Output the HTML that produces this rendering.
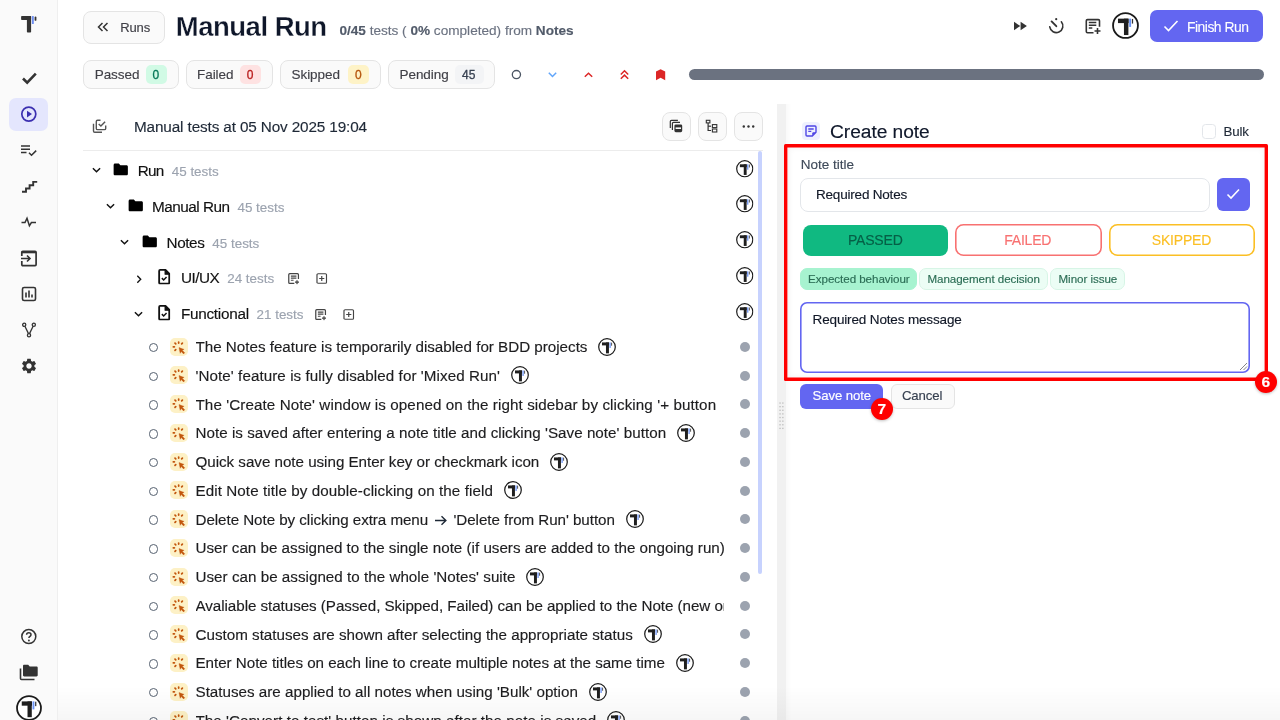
<!DOCTYPE html>
<html><head><meta charset="utf-8">
<style>
*{box-sizing:border-box;margin:0;padding:0}
html,body{width:1280px;height:720px;overflow:hidden;background:#fff;font-family:"Liberation Sans",sans-serif;color:#111827}
.t{position:absolute;white-space:nowrap;-webkit-text-stroke:0.15px currentColor}
svg.t{overflow:visible}
b{font-weight:bold}
</style></head>
<body>
<div id="root" style="position:absolute;left:0;top:0;width:1280px;height:720px;will-change:transform">
<svg width="0" height="0" style="position:absolute">
<defs>
<symbol id="tav" viewBox="0 0 28 28">
  <circle cx="14" cy="14" r="12.9" fill="#fff" stroke="#1a1a1a" stroke-width="1.9"/>
  <rect x="6.2" y="6.9" width="11" height="4.6" fill="#1f1f1f"/>
  <rect x="12.4" y="6.9" width="4.6" height="17" fill="#1f1f1f"/>
  <rect x="17.8" y="6.9" width="2" height="8.6" fill="#6b93f5"/>
  <rect x="20.6" y="7.2" width="1.3" height="4.8" fill="#333"/>
</symbol>
<symbol id="click" viewBox="0 0 18 18">
  <g stroke="#c2560c" stroke-width="1.7" stroke-linecap="round" fill="none">
    <path d="M8.67 4.0v1.1"/>
    <path d="M5.0 5.1l0.75 0.75"/>
    <path d="M12.4 5.1l-0.75 0.75"/>
    <path d="M3.3 8.85h1.1"/>
    <path d="M5.0 12.3l0.75 -0.75"/>
  </g>
  <path d="M9 9.6l5.1 1.8l-1.9 0.9l2.5 2.5l-1.1 1.1l-2.5 -2.5l-0.9 1.9z" fill="#c2560c" stroke="#c2560c" stroke-width="0.4" stroke-linejoin="round"/>
</symbol>
<symbol id="folder" viewBox="0 0 16 14">
  <path d="M0.5 2.2c0-0.9 0.6-1.6 1.5-1.6h4l1.6 1.8h6.4c0.9 0 1.5 0.6 1.5 1.5v7.6c0 0.9-0.6 1.5-1.5 1.5h-12c-0.9 0-1.5-0.6-1.5-1.5z" fill="#000"/>
</symbol>
<symbol id="doc" viewBox="0 0 13 16">
  <path d="M1.2 1.9c0-0.6 0.4-1 1-1h5.6l3.9 3.9v9.4c0 0.6-0.4 1-1 1h-8.5c-0.6 0-1-0.4-1-1z" fill="none" stroke="#111" stroke-width="1.9" stroke-linejoin="round"/>
  <path d="M7.4 0.9v4.4h4.4z" fill="#111" stroke="#111" stroke-width="1.2" stroke-linejoin="round"/>
  <path d="M4.0 9.4l1.9 1.9l3-3" fill="none" stroke="#111" stroke-width="1.6"/>
</symbol>
<symbol id="chevd" viewBox="0 0 10 6">
  <path d="M1 1l4 4l4-4" fill="none" stroke="#111" stroke-width="1.6"/>
</symbol>
<symbol id="chevr" viewBox="0 0 6 10">
  <path d="M1 1l4 4l-4 4" fill="none" stroke="#111" stroke-width="1.6"/>
</symbol>
<symbol id="noteadd" viewBox="0 0 12 12">
  <path d="M6.5 10.8h-4.8c-0.6 0-1-0.4-1-1v-8.1c0-0.6 0.4-1 1-1h8.1c0.6 0 1 0.4 1 1v4.6" fill="none" stroke="#444" stroke-width="1.3"/>
  <path d="M2.9 3.2h5.8M2.9 5.4h5.8M2.9 7.6h2.8" stroke="#444" stroke-width="1.2"/>
  <path d="M9.3 7.5v4.2M7.2 9.6h4.2" stroke="#444" stroke-width="1.3"/>
</symbol>
<symbol id="plussq" viewBox="0 0 12 12">
  <rect x="0.8" y="0.8" width="10.4" height="10.4" rx="1.2" fill="none" stroke="#444" stroke-width="1.3"/>
  <path d="M6 3.2v5.6M3.2 6h5.6" stroke="#444" stroke-width="1.3"/>
</symbol>
</defs>
</svg>
<div class="t" style="left:0px;top:0px;width:58px;height:720px;background:#fafafa;border-right:1px solid #efefef"></div>
<div class="t" style="left:9px;top:98px;width:39px;height:33px;background:#e4e6fd;border-radius:7px"></div>
<svg class="t" style="left:20px;top:15px" width="18" height="19" viewBox="0 0 18 19">
<rect x="1.1" y="1" width="10" height="4" rx="0.8" fill="#333"/><rect x="6.9" y="1" width="4.2" height="16.5" rx="0.8" fill="#333"/>
<rect x="11.9" y="1" width="1.9" height="8" rx="0.6" fill="#6b8cf0"/><rect x="14.6" y="1.5" width="1.8" height="4.3" rx="0.9" fill="#333"/></svg>
<svg class="t" style="left:21px;top:71px" width="17" height="15" viewBox="0 0 17 15">
<path d="M2 7.5l4.2 4.2l8.6-9" fill="none" stroke="#333" stroke-width="2.6"/></svg>
<svg class="t" style="left:20px;top:105px" width="18" height="18" viewBox="0 0 18 18">
<circle cx="8.8" cy="9.1" r="7" fill="none" stroke="#3b2fb0" stroke-width="1.7"/><path d="M7 5.8v6.6l5-3.3z" fill="#3b2fb0"/></svg>
<svg class="t" style="left:20px;top:143px" width="18" height="15" viewBox="0 0 18 15">
<path d="M1 3h9M1 6.3h9M1 9.6h5.5" stroke="#333" stroke-width="1.5"/><path d="M9 9.8l2.5 2.5l4.7-4.7" fill="none" stroke="#333" stroke-width="1.5"/></svg>
<svg class="t" style="left:21px;top:180px" width="17" height="14" viewBox="0 0 17 14">
<path d="M1 11.8h4v-3.3h3.6v-3.3h3.6v-3.3h4" fill="none" stroke="#333" stroke-width="1.9"/></svg>
<svg class="t" style="left:21px;top:216px" width="16" height="12" viewBox="0 0 16 12">
<path d="M0.5 6.5h3.5l2-4.3l2.4 7.6l2-3.3h4.6" fill="none" stroke="#333" stroke-width="1.5"/></svg>
<svg class="t" style="left:20px;top:250px" width="18" height="17" viewBox="0 0 18 17">
<path d="M1.8 6V2.3c0-0.6 0.4-1 1-1h12.3c0.6 0 1 0.4 1 1v12.3c0 0.6-0.4 1-1 1H2.8c-0.6 0-1-0.4-1-1V11" fill="none" stroke="#333" stroke-width="1.7"/>
<path d="M2 2.2h14" stroke="#333" stroke-width="2.2"/>
<path d="M1 8.5h8.5M7 5.5l3 3l-3 3" fill="none" stroke="#333" stroke-width="1.6"/></svg>
<svg class="t" style="left:21px;top:286px" width="16" height="16" viewBox="0 0 16 16">
<rect x="1.5" y="1.5" width="13" height="13" rx="1.6" fill="none" stroke="#333" stroke-width="1.6"/>
<path d="M5 6.5v5M8 4.5v7M11 8.5v3" stroke="#333" stroke-width="1.6"/></svg>
<svg class="t" style="left:21px;top:322px" width="16" height="16" viewBox="0 0 16 16">
<circle cx="3.2" cy="2.8" r="1.6" fill="none" stroke="#333" stroke-width="1.3"/>
<circle cx="12.8" cy="2.8" r="1.6" fill="none" stroke="#333" stroke-width="1.3"/>
<circle cx="8" cy="13.3" r="1.6" fill="none" stroke="#333" stroke-width="1.3"/>
<path d="M3.9 4.3l3.6 7.3M12.1 4.3l-3.6 7.3" stroke="#333" stroke-width="1.3"/></svg>
<svg class="t" style="left:20px;top:357px" width="18" height="18" viewBox="0 0 24 24">
<path fill="#333" d="M19.14 12.94c.04-.3.06-.61.06-.94 0-.32-.02-.64-.07-.94l2.03-1.58a.49.49 0 0 0 .12-.61l-1.92-3.32a.49.49 0 0 0-.59-.22l-2.39.96c-.5-.38-1.03-.7-1.62-.94l-.36-2.54a.48.48 0 0 0-.48-.41h-3.84c-.24 0-.43.17-.47.41l-.36 2.54c-.59.24-1.13.57-1.62.94l-2.39-.96a.49.49 0 0 0-.59.22L2.74 8.87c-.12.21-.08.47.12.61l2.03 1.58c-.05.3-.09.63-.09.94s.02.64.07.94l-2.03 1.58a.49.49 0 0 0-.12.61l1.92 3.32c.12.22.37.29.59.22l2.39-.96c.5.38 1.03.7 1.62.94l.36 2.54c.05.24.24.41.48.41h3.84c.24 0 .44-.17.47-.41l.36-2.54c.59-.24 1.13-.56 1.62-.94l2.39.96c.22.08.47 0 .59-.22l1.92-3.32c.12-.22.07-.47-.12-.61l-2.01-1.58zM12 15.6c-1.98 0-3.6-1.62-3.6-3.6s1.62-3.6 3.6-3.6 3.6 1.62 3.6 3.6-1.62 3.6-3.6 3.6z"/></svg>
<svg class="t" style="left:20px;top:628px" width="18" height="18" viewBox="0 0 18 18">
<circle cx="8.8" cy="8.6" r="7" fill="none" stroke="#333" stroke-width="1.5"/>
<path d="M6.6 6.8c0-1.3 1-2.1 2.2-2.1s2.2 0.8 2.2 2c0 1.6-2.1 1.7-2.1 3.3" fill="none" stroke="#333" stroke-width="1.5"/>
<circle cx="8.9" cy="12.5" r="0.95" fill="#333"/></svg>
<svg class="t" style="left:19px;top:664px" width="20" height="17" viewBox="0 0 20 17">
<path d="M1.5 4.5v10c0 0.6 0.4 1 1 1h13" fill="none" stroke="#333" stroke-width="1.6"/>
<path d="M4 2c0-0.7 0.5-1.2 1.2-1.2h4l1.5 1.6h6.8c0.7 0 1.2 0.5 1.2 1.2v7.6c0 0.7-0.5 1.2-1.2 1.2h-12.3c-0.7 0-1.2-0.5-1.2-1.2z" fill="#333"/></svg>
<svg class="t" style="left:16px;top:695px;" width="26" height="26"><use href="#tav"/></svg>
<div class="t" style="left:83px;top:11px;width:82px;height:33px;background:#fafafa;border:1px solid #e4e4e4;border-radius:8px"></div>
<svg class="t" style="left:97px;top:22px" width="12" height="10" viewBox="0 0 12 10">
<path d="M5.5 1l-4 4l4 4M10.5 1l-4 4l4 4" fill="none" stroke="#333" stroke-width="1.5"/></svg>
<div class="t" style="left:120.20px;top:19.50px;font-size:13px;line-height:15.60px;color:#3f3f46;font-weight:normal;letter-spacing:-0.1px;">Runs</div>
<div class="t" style="left:175.80px;top:10.17px;font-size:27.5px;line-height:33.00px;color:#0f172a;font-weight:bold;letter-spacing:-0.5px;-webkit-text-stroke:0.3px #fff">Manual Run</div>
<div class="t" style="left:339.40px;top:23.33px;font-size:13.6px;line-height:16.32px;color:#6b7280;font-weight:normal;letter-spacing:0px;"><b style="color:#525b6a">0/45</b> tests ( <b style="color:#525b6a">0%</b> completed) from <b style="color:#525b6a">Notes</b></div>
<svg class="t" style="left:1013px;top:21px" width="16" height="10" viewBox="0 0 16 10">
<path d="M1 0.8l6.3 4.2l-6.3 4.2zM7.6 0.8l6.3 4.2l-6.3 4.2z" fill="#333"/></svg>
<svg class="t" style="left:1047px;top:17px" width="18" height="18" viewBox="0 0 18 18">
<path d="M14.36 4.76A6.6 6.6 0 1 1 2.75 9.9" fill="none" stroke="#333" stroke-width="1.6" stroke-linecap="round"/>
<path d="M4.6 4.4l4.7 4.8" stroke="#333" stroke-width="1.9" stroke-linecap="round"/>
<circle cx="9.2" cy="2.2" r="1.1" fill="#333"/></svg>
<svg class="t" style="left:1085px;top:18px" width="17" height="17" viewBox="0 0 17 17">
<path d="M8.5 14.8h-6c-0.7 0-1.2-0.5-1.2-1.2v-10.8c0-0.7 0.5-1.2 1.2-1.2h10.8c0.7 0 1.2 0.5 1.2 1.2v6" fill="none" stroke="#333" stroke-width="1.6"/>
<path d="M3.8 4.4h7.5M3.8 7.2h7.5M3.8 10h3.5" stroke="#333" stroke-width="1.5"/>
<path d="M12.5 10v6M9.5 13h6" stroke="#333" stroke-width="1.6"/></svg>
<svg class="t" style="left:1112.3px;top:12.4px;" width="27" height="27"><use href="#tav"/></svg>
<div class="t" style="left:1150px;top:10px;width:113px;height:32px;background:#6366f1;border-radius:7px"></div>
<svg class="t" style="left:1163px;top:19px" width="16" height="14" viewBox="0 0 16 14">
<path d="M1.5 7.5l4 4l9-9.5" fill="none" stroke="#fff" stroke-width="1.6"/></svg>
<div class="t" style="left:1187.00px;top:19.14px;font-size:13.9px;line-height:16.68px;color:#fff;font-weight:normal;letter-spacing:-0.5px;-webkit-text-stroke:0.1px #fff">Finish Run</div>
<div class="t" style="left:83.2px;top:60px;width:95.5px;height:29px;background:#fafafa;border:1px solid #e4e4e4;border-radius:8px"></div>
<div class="t" style="left:94.70px;top:67.22px;font-size:13.5px;line-height:16.20px;color:#3f3f46;font-weight:normal;letter-spacing:-0.05px;">Passed</div>
<div class="t" style="left:145.5px;top:65px;width:21.3px;height:19px;background:#d1fae5;border-radius:5px"></div>
<div class="t" style="left:152.40px;top:67.64px;font-size:12px;line-height:14.40px;color:#047857;font-weight:normal;letter-spacing:0px;-webkit-text-stroke:0.3px currentColor">0</div>
<div class="t" style="left:185.5px;top:60px;width:87.5px;height:29px;background:#fafafa;border:1px solid #e4e4e4;border-radius:8px"></div>
<div class="t" style="left:197.00px;top:67.22px;font-size:13.5px;line-height:16.20px;color:#3f3f46;font-weight:normal;letter-spacing:-0.05px;">Failed</div>
<div class="t" style="left:239.8px;top:65px;width:21.3px;height:19px;background:#fee2e2;border-radius:5px"></div>
<div class="t" style="left:246.70px;top:67.64px;font-size:12px;line-height:14.40px;color:#b91c1c;font-weight:normal;letter-spacing:0px;-webkit-text-stroke:0.3px currentColor">0</div>
<div class="t" style="left:280px;top:60px;width:100.5px;height:29px;background:#fafafa;border:1px solid #e4e4e4;border-radius:8px"></div>
<div class="t" style="left:291.50px;top:67.22px;font-size:13.5px;line-height:16.20px;color:#3f3f46;font-weight:normal;letter-spacing:-0.05px;">Skipped</div>
<div class="t" style="left:348px;top:65px;width:21.3px;height:19px;background:#fef3c7;border-radius:5px"></div>
<div class="t" style="left:354.90px;top:67.64px;font-size:12px;line-height:14.40px;color:#b45309;font-weight:normal;letter-spacing:0px;-webkit-text-stroke:0.3px currentColor">0</div>
<div class="t" style="left:388px;top:60px;width:106.5px;height:29px;background:#fafafa;border:1px solid #e4e4e4;border-radius:8px"></div>
<div class="t" style="left:399.50px;top:67.22px;font-size:13.5px;line-height:16.20px;color:#3f3f46;font-weight:normal;letter-spacing:-0.05px;">Pending</div>
<div class="t" style="left:455px;top:65px;width:28.5px;height:19px;background:#f3f4f6;border-radius:5px"></div>
<div class="t" style="left:462.05px;top:67.64px;font-size:12px;line-height:14.40px;color:#374151;font-weight:normal;letter-spacing:0px;-webkit-text-stroke:0.3px currentColor">45</div>
<svg class="t" style="left:510px;top:69px" width="13" height="12" viewBox="0 0 13 12"><circle cx="6.4" cy="5.6" r="4.1" fill="none" stroke="#4b5563" stroke-width="1.3"/></svg>
<svg class="t" style="left:547px;top:71px" width="11" height="8" viewBox="0 0 11 8"><path d="M1.8 1.8l3.7 3.7l3.7-3.7" fill="none" stroke="#60a5fa" stroke-width="1.5"/></svg>
<svg class="t" style="left:583px;top:71px" width="11" height="8" viewBox="0 0 11 8"><path d="M1.8 5.8l3.7-3.5l3.7 3.5" fill="none" stroke="#dc2626" stroke-width="1.5"/></svg>
<svg class="t" style="left:619px;top:69px" width="11" height="12" viewBox="0 0 11 12"><path d="M1.8 5.5l3.7-3.7l3.7 3.7M1.8 9.8l3.7-3.7l3.7 3.7" fill="none" stroke="#dc2626" stroke-width="1.5"/></svg>
<svg class="t" style="left:655px;top:69px" width="11" height="12" viewBox="0 0 11 12"><path d="M1 2.5l4.6-2.2l4.6 2.2v8.7l-4.6-2.5l-4.6 2.5z" fill="#dc2626"/></svg>
<div class="t" style="left:689px;top:69px;width:575px;height:11px;background:#6b7280;border-radius:6px"></div>
<svg class="t" style="left:92px;top:119px" width="15" height="15" viewBox="0 0 15 15">
<path d="M1.5 4.8v7.3c0 0.7 0.5 1.2 1.2 1.2h7.3" fill="none" stroke="#555" stroke-width="1.4"/>
<path d="M8.5 1.2h-3c-0.7 0-1.2 0.5-1.2 1.2v7c0 0.7 0.5 1.2 1.2 1.2h7c0.7 0 1.2-0.5 1.2-1.2v-3" fill="none" stroke="#555" stroke-width="1.4"/>
<path d="M6.7 4.9l2.2 2.2l4.2-4.4" fill="none" stroke="#555" stroke-width="1.4"/></svg>
<div class="t" style="left:134.00px;top:118.32px;font-size:15.3px;line-height:18.36px;color:#1f2937;font-weight:normal;letter-spacing:-0.13px;">Manual tests at 05 Nov 2025 19:04</div>
<div class="t" style="left:662px;top:112px;width:29px;height:29px;background:#fafafa;border:1px solid #e4e4e4;border-radius:8px"></div>
<div class="t" style="left:698px;top:112px;width:29px;height:29px;background:#fafafa;border:1px solid #e4e4e4;border-radius:8px"></div>
<div class="t" style="left:734px;top:112px;width:29px;height:29px;background:#fafafa;border:1px solid #e4e4e4;border-radius:8px"></div>
<svg class="t" style="left:669px;top:119px" width="15" height="15" viewBox="0 0 15 15">
<path d="M1.3 9V2.6c0-0.7 0.5-1.2 1.2-1.2h6.4M3.4 11V4.6c0-0.7 0.5-1.2 1.2-1.2h6.4" fill="none" stroke="#333" stroke-width="1.2"/>
<rect x="5.4" y="5.4" width="7.8" height="7.8" rx="1.4" fill="#333"/><rect x="6.6" y="8.4" width="5.4" height="1.6" fill="#fafafa"/></svg>
<svg class="t" style="left:705px;top:119px" width="15" height="15" viewBox="0 0 15 15">
<rect x="1.3" y="1.3" width="3.6" height="2.6" fill="none" stroke="#333" stroke-width="1.1"/>
<path d="M3.1 4v7.5h3" fill="none" stroke="#333" stroke-width="1.2"/><path d="M3.1 7.2h3" stroke="#333" stroke-width="1.2"/>
<rect x="7.4" y="5.6" width="4.4" height="3" fill="none" stroke="#333" stroke-width="1.1"/>
<rect x="7.4" y="10" width="4.4" height="3" fill="none" stroke="#333" stroke-width="1.1"/></svg>
<svg class="t" style="left:741px;top:124px" width="15" height="5" viewBox="0 0 15 5"><circle cx="2.8" cy="2.5" r="1.2" fill="#333"/><circle cx="7.5" cy="2.5" r="1.2" fill="#333"/><circle cx="12.2" cy="2.5" r="1.2" fill="#333"/></svg>
<div class="t" style="left:83px;top:150px;width:680px;height:1px;background:#ececec"></div>
<svg class="t" style="left:91.5px;top:167.1px;" width="9" height="6"><use href="#chevd"/></svg>
<svg class="t" style="left:113px;top:162.6px;" width="15.5" height="13.3"><use href="#folder"/></svg>
<div class="t" style="left:137.80px;top:161.52px;font-size:15.3px;line-height:18.36px;color:#111111;font-weight:normal;letter-spacing:-0.8px;">Run<span style="font-size:13.4px;color:#9ca3af;margin-left:8.30px;letter-spacing:0px">45 tests</span></div>
<svg class="t" style="left:736px;top:159.5px;" width="17.5" height="17.5"><use href="#tav"/></svg>
<svg class="t" style="left:105.5px;top:203.1px;" width="9" height="6"><use href="#chevd"/></svg>
<svg class="t" style="left:127.5px;top:198.6px;" width="15.5" height="13.3"><use href="#folder"/></svg>
<div class="t" style="left:152.00px;top:197.52px;font-size:15.3px;line-height:18.36px;color:#111111;font-weight:normal;letter-spacing:-0.5px;">Manual Run<span style="font-size:13.4px;color:#9ca3af;margin-left:8.00px;letter-spacing:0px">45 tests</span></div>
<svg class="t" style="left:736px;top:195.3px;" width="17.5" height="17.5"><use href="#tav"/></svg>
<svg class="t" style="left:120px;top:239.1px;" width="9" height="6"><use href="#chevd"/></svg>
<svg class="t" style="left:142px;top:234.6px;" width="15.5" height="13.3"><use href="#folder"/></svg>
<div class="t" style="left:166.50px;top:233.52px;font-size:15.3px;line-height:18.36px;color:#111111;font-weight:normal;letter-spacing:-0.4px;">Notes<span style="font-size:13.4px;color:#9ca3af;margin-left:7.90px;letter-spacing:0px">45 tests</span></div>
<svg class="t" style="left:736px;top:231px;" width="17.5" height="17.5"><use href="#tav"/></svg>
<svg class="t" style="left:135.7px;top:274.79999999999995px;" width="6" height="8.5"><use href="#chevr"/></svg>
<svg class="t" style="left:157.8px;top:269.09999999999997px;" width="12.5" height="15.5"><use href="#doc"/></svg>
<div class="t" style="left:180.90px;top:269.32px;font-size:15.3px;line-height:18.36px;color:#111111;font-weight:normal;letter-spacing:-0.5px;">UI/UX<span style="font-size:13.4px;color:#9ca3af;margin-left:8.00px;letter-spacing:0px">24 tests</span></div>
<svg class="t" style="left:736px;top:266.8px;" width="17.5" height="17.5"><use href="#tav"/></svg>
<svg class="t" style="left:134.4px;top:310.9px;" width="9" height="6"><use href="#chevd"/></svg>
<svg class="t" style="left:157.8px;top:305.09999999999997px;" width="12.5" height="15.5"><use href="#doc"/></svg>
<div class="t" style="left:180.90px;top:305.32px;font-size:15.3px;line-height:18.36px;color:#111111;font-weight:normal;letter-spacing:-0.27px;">Functional<span style="font-size:13.4px;color:#9ca3af;margin-left:7.77px;letter-spacing:0px">21 tests</span></div>
<svg class="t" style="left:736px;top:302.5px;" width="17.5" height="17.5"><use href="#tav"/></svg>
<svg class="t" style="left:287.8px;top:273px;" width="11.7" height="11.5"><use href="#noteadd"/></svg>
<svg class="t" style="left:316.2px;top:273px;" width="11.5" height="11"><use href="#plussq"/></svg>
<svg class="t" style="left:314.8px;top:309px;" width="11.7" height="11.5"><use href="#noteadd"/></svg>
<svg class="t" style="left:343.4px;top:309px;" width="11.5" height="11"><use href="#plussq"/></svg>
<div id="tests">
<div class="t" style="left:148.5px;top:342.9px;width:9.5px;height:9.5px;border:1.3px solid #55606f;border-radius:50%"></div>
<div class="t" style="left:169.7px;top:337.7px;width:18px;height:18px;background:#fdf1c6;border-radius:5px"></div>
<svg class="t" style="left:169.7px;top:337.7px;" width="18" height="18"><use href="#click"/></svg>
<div class="t" style="left:195.5px;top:337.00px;width:528.5px;overflow:hidden;font-size:15.2px;line-height:19px;color:#1d1d1f;letter-spacing:-0.01px">The Notes feature is temporarily disabled for BDD projects<svg style="display:inline-block;vertical-align:-3.5px;margin-left:11px" width="18" height="18"><use href="#tav"/></svg></div>
<div class="t" style="left:740px;top:341.8px;width:10px;height:10px;background:#9ca3af;border-radius:50%"></div>
<div class="t" style="left:148.5px;top:371.65px;width:9.5px;height:9.5px;border:1.3px solid #55606f;border-radius:50%"></div>
<div class="t" style="left:169.7px;top:366.45px;width:18px;height:18px;background:#fdf1c6;border-radius:5px"></div>
<svg class="t" style="left:169.7px;top:366.45px;" width="18" height="18"><use href="#click"/></svg>
<div class="t" style="left:195.5px;top:365.75px;width:528.5px;overflow:hidden;font-size:15.2px;line-height:19px;color:#1d1d1f;letter-spacing:0.07px">'Note' feature is fully disabled for 'Mixed Run'<svg style="display:inline-block;vertical-align:-3.5px;margin-left:11px" width="18" height="18"><use href="#tav"/></svg></div>
<div class="t" style="left:740px;top:370.55px;width:10px;height:10px;background:#9ca3af;border-radius:50%"></div>
<div class="t" style="left:148.5px;top:400.4px;width:9.5px;height:9.5px;border:1.3px solid #55606f;border-radius:50%"></div>
<div class="t" style="left:169.7px;top:395.2px;width:18px;height:18px;background:#fdf1c6;border-radius:5px"></div>
<svg class="t" style="left:169.7px;top:395.2px;" width="18" height="18"><use href="#click"/></svg>
<div class="t" style="left:195.5px;top:394.50px;width:528.5px;overflow:hidden;font-size:15.2px;line-height:19px;color:#1d1d1f;letter-spacing:0.087px">The 'Create Note' window is opened on the right sidebar by clicking '+ button</div>
<div class="t" style="left:740px;top:399.3px;width:10px;height:10px;background:#9ca3af;border-radius:50%"></div>
<div class="t" style="left:148.5px;top:429.15px;width:9.5px;height:9.5px;border:1.3px solid #55606f;border-radius:50%"></div>
<div class="t" style="left:169.7px;top:423.95px;width:18px;height:18px;background:#fdf1c6;border-radius:5px"></div>
<svg class="t" style="left:169.7px;top:423.95px;" width="18" height="18"><use href="#click"/></svg>
<div class="t" style="left:195.5px;top:423.25px;width:528.5px;overflow:hidden;font-size:15.2px;line-height:19px;color:#1d1d1f;letter-spacing:0.03px">Note is saved after entering a note title and clicking 'Save note' button<svg style="display:inline-block;vertical-align:-3.5px;margin-left:11px" width="18" height="18"><use href="#tav"/></svg></div>
<div class="t" style="left:740px;top:428.05px;width:10px;height:10px;background:#9ca3af;border-radius:50%"></div>
<div class="t" style="left:148.5px;top:457.9px;width:9.5px;height:9.5px;border:1.3px solid #55606f;border-radius:50%"></div>
<div class="t" style="left:169.7px;top:452.7px;width:18px;height:18px;background:#fdf1c6;border-radius:5px"></div>
<svg class="t" style="left:169.7px;top:452.7px;" width="18" height="18"><use href="#click"/></svg>
<div class="t" style="left:195.5px;top:452.00px;width:528.5px;overflow:hidden;font-size:15.2px;line-height:19px;color:#1d1d1f;letter-spacing:-0.03px">Quick save note using Enter key or checkmark icon<svg style="display:inline-block;vertical-align:-3.5px;margin-left:11px" width="18" height="18"><use href="#tav"/></svg></div>
<div class="t" style="left:740px;top:456.8px;width:10px;height:10px;background:#9ca3af;border-radius:50%"></div>
<div class="t" style="left:148.5px;top:486.65px;width:9.5px;height:9.5px;border:1.3px solid #55606f;border-radius:50%"></div>
<div class="t" style="left:169.7px;top:481.45px;width:18px;height:18px;background:#fdf1c6;border-radius:5px"></div>
<svg class="t" style="left:169.7px;top:481.45px;" width="18" height="18"><use href="#click"/></svg>
<div class="t" style="left:195.5px;top:480.75px;width:528.5px;overflow:hidden;font-size:15.2px;line-height:19px;color:#1d1d1f;letter-spacing:0.077px">Edit Note title by double-clicking on the field<svg style="display:inline-block;vertical-align:-3.5px;margin-left:11px" width="18" height="18"><use href="#tav"/></svg></div>
<div class="t" style="left:740px;top:485.55px;width:10px;height:10px;background:#9ca3af;border-radius:50%"></div>
<div class="t" style="left:148.5px;top:515.4px;width:9.5px;height:9.5px;border:1.3px solid #55606f;border-radius:50%"></div>
<div class="t" style="left:169.7px;top:510.2px;width:18px;height:18px;background:#fdf1c6;border-radius:5px"></div>
<svg class="t" style="left:169.7px;top:510.2px;" width="18" height="18"><use href="#click"/></svg>
<div class="t" style="left:195.5px;top:509.50px;width:528.5px;overflow:hidden;font-size:15.2px;line-height:19px;color:#1d1d1f;letter-spacing:-0.06px">Delete Note by clicking extra menu <svg style="display:inline-block;vertical-align:-1px;margin:0 1px 0 2px" width="14" height="11" viewBox="0 0 14 11"><path d="M1 5.5h11M7.5 1.2l4.4 4.3l-4.4 4.3" fill="none" stroke="#1f2937" stroke-width="1.4"/></svg> 'Delete from Run' button<svg style="display:inline-block;vertical-align:-3.5px;margin-left:11px" width="18" height="18"><use href="#tav"/></svg></div>
<div class="t" style="left:740px;top:514.3px;width:10px;height:10px;background:#9ca3af;border-radius:50%"></div>
<div class="t" style="left:148.5px;top:544.15px;width:9.5px;height:9.5px;border:1.3px solid #55606f;border-radius:50%"></div>
<div class="t" style="left:169.7px;top:538.95px;width:18px;height:18px;background:#fdf1c6;border-radius:5px"></div>
<svg class="t" style="left:169.7px;top:538.95px;" width="18" height="18"><use href="#click"/></svg>
<div class="t" style="left:195.5px;top:538.25px;width:528.5px;overflow:hidden;font-size:15.2px;line-height:19px;color:#1d1d1f;letter-spacing:0.0px">User can be assigned to the single note (if users are added to the ongoing run)</div>
<div class="t" style="left:740px;top:543.05px;width:10px;height:10px;background:#9ca3af;border-radius:50%"></div>
<div class="t" style="left:148.5px;top:572.9px;width:9.5px;height:9.5px;border:1.3px solid #55606f;border-radius:50%"></div>
<div class="t" style="left:169.7px;top:567.7px;width:18px;height:18px;background:#fdf1c6;border-radius:5px"></div>
<svg class="t" style="left:169.7px;top:567.7px;" width="18" height="18"><use href="#click"/></svg>
<div class="t" style="left:195.5px;top:567.00px;width:528.5px;overflow:hidden;font-size:15.2px;line-height:19px;color:#1d1d1f;letter-spacing:0.02px">User can be assigned to the whole 'Notes' suite<svg style="display:inline-block;vertical-align:-3.5px;margin-left:11px" width="18" height="18"><use href="#tav"/></svg></div>
<div class="t" style="left:740px;top:571.8px;width:10px;height:10px;background:#9ca3af;border-radius:50%"></div>
<div class="t" style="left:148.5px;top:601.65px;width:9.5px;height:9.5px;border:1.3px solid #55606f;border-radius:50%"></div>
<div class="t" style="left:169.7px;top:596.45px;width:18px;height:18px;background:#fdf1c6;border-radius:5px"></div>
<svg class="t" style="left:169.7px;top:596.45px;" width="18" height="18"><use href="#click"/></svg>
<div class="t" style="left:195.5px;top:595.75px;width:528.5px;overflow:hidden;font-size:15.2px;line-height:19px;color:#1d1d1f;letter-spacing:-0.055px">Avaliable statuses (Passed, Skipped, Failed) can be applied to the Note (new one)</div>
<div class="t" style="left:740px;top:600.55px;width:10px;height:10px;background:#9ca3af;border-radius:50%"></div>
<div class="t" style="left:148.5px;top:630.4px;width:9.5px;height:9.5px;border:1.3px solid #55606f;border-radius:50%"></div>
<div class="t" style="left:169.7px;top:625.2px;width:18px;height:18px;background:#fdf1c6;border-radius:5px"></div>
<svg class="t" style="left:169.7px;top:625.2px;" width="18" height="18"><use href="#click"/></svg>
<div class="t" style="left:195.5px;top:624.50px;width:528.5px;overflow:hidden;font-size:15.2px;line-height:19px;color:#1d1d1f;letter-spacing:0.0px">Custom statuses are shown after selecting the appropriate status<svg style="display:inline-block;vertical-align:-3.5px;margin-left:11px" width="18" height="18"><use href="#tav"/></svg></div>
<div class="t" style="left:740px;top:629.3px;width:10px;height:10px;background:#9ca3af;border-radius:50%"></div>
<div class="t" style="left:148.5px;top:659.15px;width:9.5px;height:9.5px;border:1.3px solid #55606f;border-radius:50%"></div>
<div class="t" style="left:169.7px;top:653.95px;width:18px;height:18px;background:#fdf1c6;border-radius:5px"></div>
<svg class="t" style="left:169.7px;top:653.95px;" width="18" height="18"><use href="#click"/></svg>
<div class="t" style="left:195.5px;top:653.25px;width:528.5px;overflow:hidden;font-size:15.2px;line-height:19px;color:#1d1d1f;letter-spacing:-0.035px">Enter Note titles on each line to create multiple notes at the same time<svg style="display:inline-block;vertical-align:-3.5px;margin-left:11px" width="18" height="18"><use href="#tav"/></svg></div>
<div class="t" style="left:740px;top:658.05px;width:10px;height:10px;background:#9ca3af;border-radius:50%"></div>
<div class="t" style="left:148.5px;top:687.9px;width:9.5px;height:9.5px;border:1.3px solid #55606f;border-radius:50%"></div>
<div class="t" style="left:169.7px;top:682.7px;width:18px;height:18px;background:#fdf1c6;border-radius:5px"></div>
<svg class="t" style="left:169.7px;top:682.7px;" width="18" height="18"><use href="#click"/></svg>
<div class="t" style="left:195.5px;top:682.00px;width:528.5px;overflow:hidden;font-size:15.2px;line-height:19px;color:#1d1d1f;letter-spacing:0.0px">Statuses are applied to all notes when using 'Bulk' option<svg style="display:inline-block;vertical-align:-3.5px;margin-left:11px" width="18" height="18"><use href="#tav"/></svg></div>
<div class="t" style="left:740px;top:686.8px;width:10px;height:10px;background:#9ca3af;border-radius:50%"></div>
<div class="t" style="left:148.5px;top:716.65px;width:9.5px;height:9.5px;border:1.3px solid #55606f;border-radius:50%"></div>
<div class="t" style="left:169.7px;top:711.45px;width:18px;height:18px;background:#fdf1c6;border-radius:5px"></div>
<svg class="t" style="left:169.7px;top:711.45px;" width="18" height="18"><use href="#click"/></svg>
<div class="t" style="left:195.5px;top:710.75px;width:528.5px;overflow:hidden;font-size:15.2px;line-height:19px;color:#1d1d1f;letter-spacing:0.04px">The 'Convert to test' button is shown after the note is saved<svg style="display:inline-block;vertical-align:-3.5px;margin-left:11px" width="18" height="18"><use href="#tav"/></svg></div>
<div class="t" style="left:740px;top:715.55px;width:10px;height:10px;background:#9ca3af;border-radius:50%"></div>
</div>
<div class="t" style="left:758.3px;top:150.5px;width:4.2px;height:423.3px;background:#c7d2fe;border-radius:2px"></div>
<div class="t" style="left:777.4px;top:104px;width:8.6px;height:616px;background:#f1f1f1"></div>
<svg class="t" style="left:779.2px;top:401.8px" width="6" height="30"><rect x="0.40" y="0.40" width="1.3" height="1.3" fill="#bcbcbc"/><rect x="3.20" y="0.40" width="1.3" height="1.3" fill="#bcbcbc"/><rect x="0.40" y="4.02" width="1.3" height="1.3" fill="#bcbcbc"/><rect x="3.20" y="4.02" width="1.3" height="1.3" fill="#bcbcbc"/><rect x="0.40" y="7.64" width="1.3" height="1.3" fill="#bcbcbc"/><rect x="3.20" y="7.64" width="1.3" height="1.3" fill="#bcbcbc"/><rect x="0.40" y="11.26" width="1.3" height="1.3" fill="#bcbcbc"/><rect x="3.20" y="11.26" width="1.3" height="1.3" fill="#bcbcbc"/><rect x="0.40" y="14.88" width="1.3" height="1.3" fill="#bcbcbc"/><rect x="3.20" y="14.88" width="1.3" height="1.3" fill="#bcbcbc"/><rect x="0.40" y="18.50" width="1.3" height="1.3" fill="#bcbcbc"/><rect x="3.20" y="18.50" width="1.3" height="1.3" fill="#bcbcbc"/><rect x="0.40" y="22.12" width="1.3" height="1.3" fill="#bcbcbc"/><rect x="3.20" y="22.12" width="1.3" height="1.3" fill="#bcbcbc"/><rect x="0.40" y="25.74" width="1.3" height="1.3" fill="#bcbcbc"/><rect x="3.20" y="25.74" width="1.3" height="1.3" fill="#bcbcbc"/></svg>
<div class="t" style="left:786px;top:104px;width:5px;height:616px;background:linear-gradient(90deg,rgba(0,0,0,0.025),rgba(0,0,0,0))"></div>
<div class="t" style="left:802.3px;top:122.3px;width:17.5px;height:17.7px;background:#eef0fe;border-radius:4px"></div>
<svg class="t" style="left:805px;top:125px" width="12" height="12" viewBox="0 0 12 12">
<path d="M7.3 11H2c-0.6 0-1-0.4-1-1V2c0-0.6 0.4-1 1-1h8c0.6 0 1 0.4 1 1v5.3z" fill="none" stroke="#4f46e5" stroke-width="1.4" stroke-linejoin="round"/>
<path d="M3.3 4h5.4M3.3 6.4h3" stroke="#4f46e5" stroke-width="1.3"/><path d="M7.3 11V8.2c0-0.5 0.4-0.9 0.9-0.9H11z" fill="#4f46e5"/></svg>
<div class="t" style="left:830.00px;top:119.83px;font-size:19.2px;line-height:23.04px;color:#0f172a;font-weight:normal;letter-spacing:-0.05px;">Create note</div>
<div class="t" style="left:1201.5px;top:123.7px;width:14.7px;height:14.9px;border:1px solid #e3e6ea;border-radius:3.5px;background:#fff"></div>
<div class="t" style="left:1223.60px;top:124.41px;font-size:13.3px;line-height:15.96px;color:#1f2937;font-weight:normal;letter-spacing:-0.15px;">Bulk</div>
<div class="t" style="left:787.5px;top:147.2px;width:477px;height:230.6px;box-shadow:inset 0 0 6px rgba(0,0,0,0.07)"></div>
<div class="t" style="left:784.2px;top:143.9px;width:483.9px;height:237.4px;box-shadow:inset 0 0 0 3.4px #ff0000;border-radius:1.5px"></div>
<div class="t" style="left:800.80px;top:156.62px;font-size:13.5px;line-height:16.20px;color:#3f4a5a;font-weight:normal;letter-spacing:0px;">Note title</div>
<div class="t" style="left:800.4px;top:178px;width:409.4px;height:34px;border:1px solid #e3e6ea;border-radius:8px;background:#fff"></div>
<div class="t" style="left:816.00px;top:186.62px;font-size:13.5px;line-height:16.20px;color:#111827;font-weight:normal;letter-spacing:-0.2px;">Required Notes</div>
<div class="t" style="left:1216.7px;top:178px;width:33px;height:32.5px;background:#6366f1;border-radius:6px"></div>
<svg class="t" style="left:1226px;top:188px" width="15" height="12" viewBox="0 0 15 12">
<path d="M1.5 6.5l3.5 3.5l8-8.5" fill="none" stroke="#fff" stroke-width="1.6"/></svg>
<div class="t" style="left:802.9px;top:224.6px;width:145.5px;height:31.8px;background:#10b981;border-radius:8px"></div>
<div class="t" style="left:848.00px;top:232.15px;font-size:14px;line-height:16.80px;color:#065f46;font-weight:normal;letter-spacing:-0.2px;">PASSED</div>
<div class="t" style="left:955.3px;top:224.3px;width:146.3px;height:32px;box-shadow:inset 0 0 0 1.6px #f87171;border-radius:8.5px"></div>
<div class="t" style="left:1004.20px;top:232.15px;font-size:14px;line-height:16.80px;color:#f87171;font-weight:normal;letter-spacing:-0.2px;">FAILED</div>
<div class="t" style="left:1108.5px;top:224.3px;width:146px;height:32px;box-shadow:inset 0 0 0 1.6px #fbbf24;border-radius:8.5px"></div>
<div class="t" style="left:1151.80px;top:232.15px;font-size:14px;line-height:16.80px;color:#fbbf24;font-weight:normal;letter-spacing:-0.2px;">SKIPPED</div>
<div class="t" style="left:799.8px;top:268px;width:117.7px;height:21.6px;background:#a7f3d0;border:1px solid #a7f3d0;border-radius:7px"></div>
<div class="t" style="left:808.10px;top:272.32px;font-size:11.6px;line-height:13.92px;color:#2b6d55;font-weight:normal;letter-spacing:-0.05px;">Expected behaviour</div>
<div class="t" style="left:919.3px;top:268px;width:128.5px;height:21.6px;background:#ecfdf5;border:1px solid #d7f5e6;border-radius:7px"></div>
<div class="t" style="left:927.40px;top:272.32px;font-size:11.6px;line-height:13.92px;color:#2b6d55;font-weight:normal;letter-spacing:-0.05px;">Management decision</div>
<div class="t" style="left:1050px;top:268px;width:75.1px;height:21.6px;background:#ecfdf5;border:1px solid #d7f5e6;border-radius:7px"></div>
<div class="t" style="left:1058.50px;top:272.32px;font-size:11.6px;line-height:13.92px;color:#2b6d55;font-weight:normal;letter-spacing:-0.05px;">Minor issue</div>
<div class="t" style="left:799.9px;top:302.4px;width:450.3px;height:71px;box-shadow:inset 0 0 0 1.6px #6366f1;border-radius:7px;background:#fff"></div>
<svg class="t" style="left:1239px;top:362px" width="9" height="9" viewBox="0 0 9 9"><path d="M1 8L8 1M4.5 8L8 4.5" stroke="#777" stroke-width="0.9"/></svg>
<div class="t" style="left:812.60px;top:312.02px;font-size:13.5px;line-height:16.20px;color:#111827;font-weight:normal;letter-spacing:-0.15px;">Required Notes message</div>
<div class="t" style="left:800.3px;top:383.8px;width:82.7px;height:25px;background:#6366f1;border-radius:6px"></div>
<div class="t" style="left:812.60px;top:388.01px;font-size:13.2px;line-height:15.84px;color:#fff;font-weight:normal;letter-spacing:-0.1px;">Save note</div>
<div class="t" style="left:890.5px;top:383.8px;width:64.1px;height:25px;background:#fafafa;border:1px solid #e4e4e4;border-radius:6px"></div>
<div class="t" style="left:901.90px;top:388.01px;font-size:13.2px;line-height:15.84px;color:#374151;font-weight:normal;letter-spacing:-0.1px;">Cancel</div>
<div class="t" style="left:1255px;top:370.8px;width:22px;height:22px;border-radius:50%;background:#f00;box-shadow:0 1px 3px rgba(0,0,0,0.25)"></div>
<div class="t" style="left:1261.40px;top:372.73px;font-size:15.5px;line-height:18.60px;color:#fff;font-weight:bold;letter-spacing:0px;">6</div>
<div class="t" style="left:871.2px;top:397.9px;width:22px;height:22px;border-radius:50%;background:#f00;box-shadow:0 1px 3px rgba(0,0,0,0.25)"></div>
<div class="t" style="left:877.60px;top:399.83px;font-size:15.5px;line-height:18.60px;color:#fff;font-weight:bold;letter-spacing:0px;">7</div>
<div class="t" style="left:58px;top:686px;width:1222px;height:34px;background:linear-gradient(rgba(0,0,0,0),rgba(0,0,0,0.035))"></div>
</div></body></html>
